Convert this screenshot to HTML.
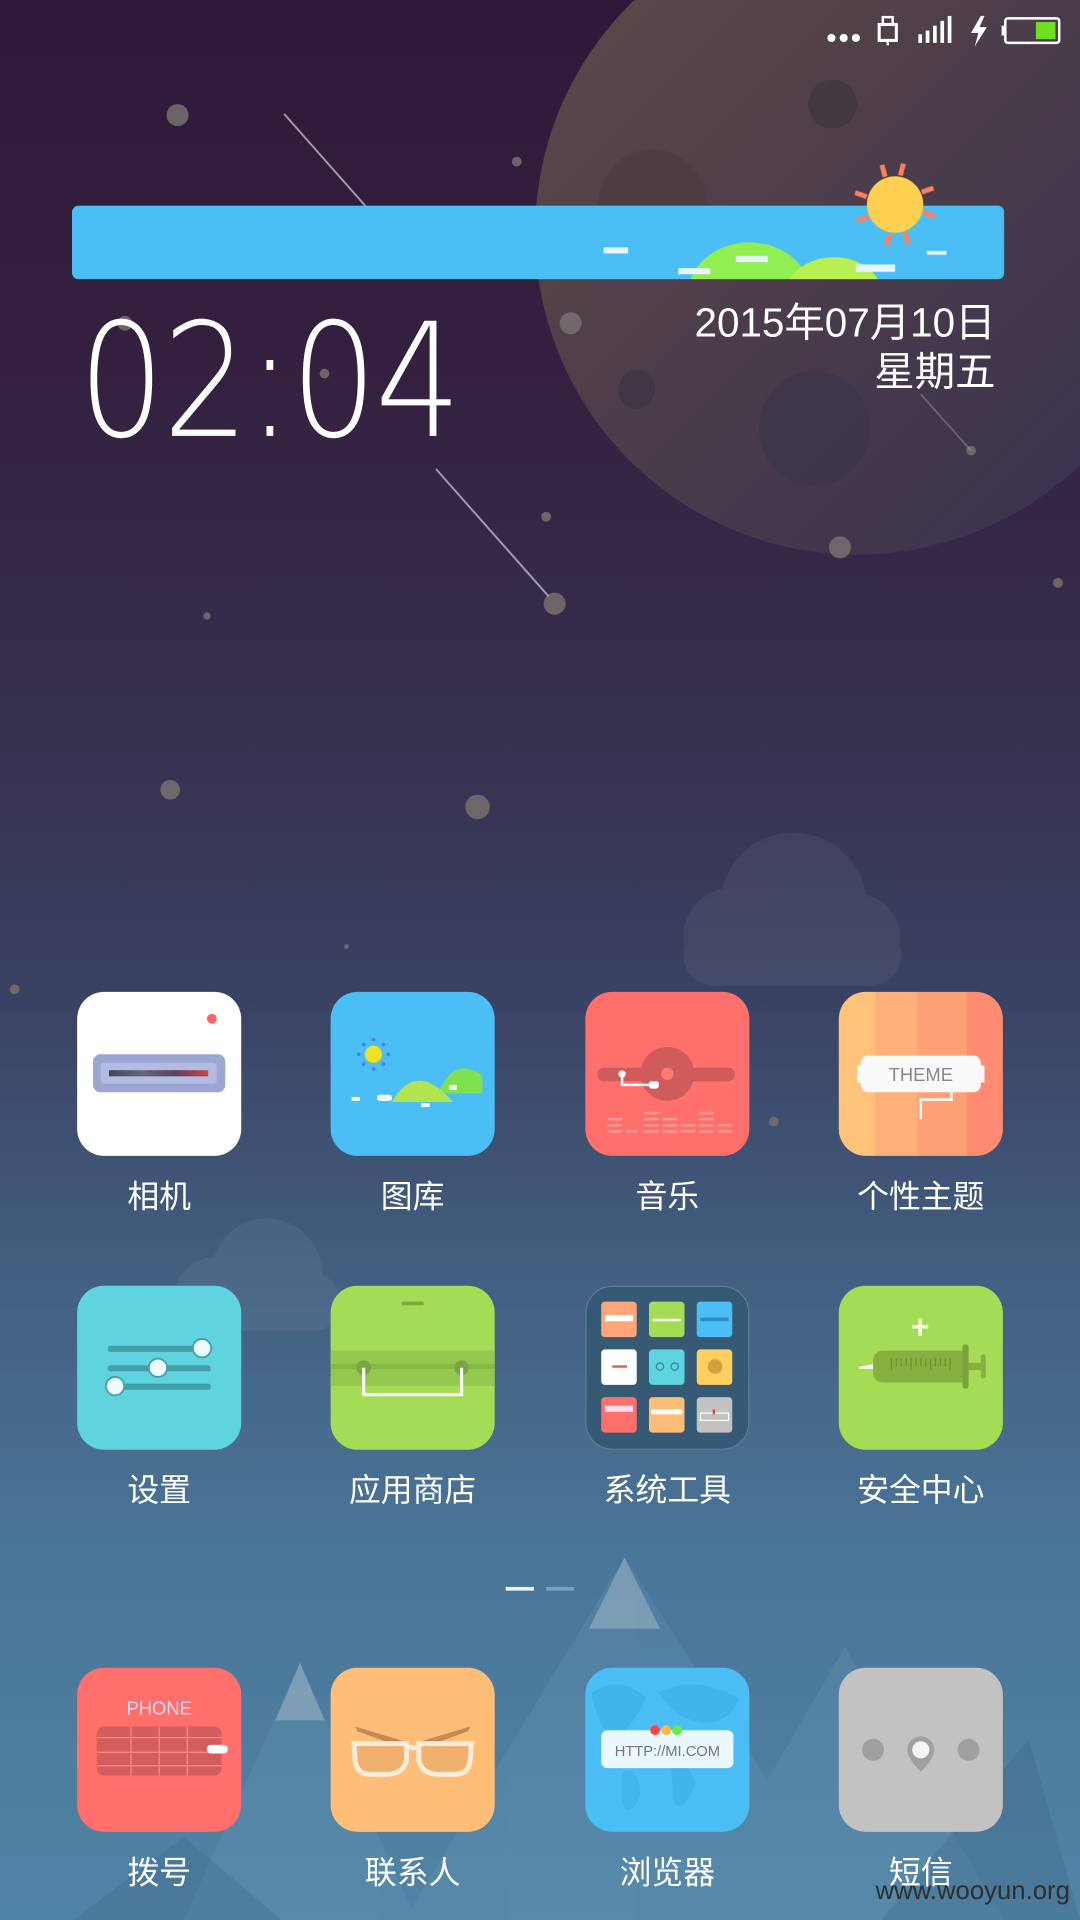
<!DOCTYPE html>
<html><head><meta charset="utf-8"><style>
html,body{margin:0;padding:0;width:1080px;height:1920px;overflow:hidden;background:#3a4a6e}
#s{position:absolute;left:0;top:0;width:882px;height:1568px;transform:scale(1.22449);transform-origin:0 0;overflow:hidden;
background:linear-gradient(180deg,#2e1838 0%,#33213f 20%,#37304f 38%,#3a4263 52%,#425e80 66%,#4a7496 80%,#5084a6 100%);
font-family:"Liberation Sans","Noto Sans CJK SC",sans-serif}
.a{position:absolute}
.ic{position:absolute;width:134px;height:134px;border-radius:22px;overflow:hidden}
.lb{position:absolute;width:180px;text-align:center;color:#fff;font-size:26px;line-height:30px}
</style></head><body><div id="s">
<svg class="a" style="left:0;top:0" width="882" height="1568">
<defs><linearGradient id="mg" x1="0" y1="0" x2="1" y2="1"><stop offset="0" stop-color="#5e4a48"/><stop offset="0.5" stop-color="#4a3c4a"/><stop offset="1" stop-color="#363050"/></linearGradient></defs>
<circle cx="700" cy="190" r="263" fill="url(#mg)"/>
<ellipse cx="533" cy="170" rx="45" ry="48" fill="#4a3c40" opacity=".7"/>
<ellipse cx="680" cy="85" rx="20" ry="20" fill="#3f3440" opacity=".7"/>
<ellipse cx="520" cy="318" rx="15" ry="16" fill="#3e3444" opacity=".8"/>
<ellipse cx="665" cy="350" rx="45" ry="47" fill="#3c3448" opacity=".7"/>
<g fill="#77706e" opacity=".85">
<circle cx="145" cy="94" r="9"/><circle cx="422" cy="132" r="4"/><circle cx="102" cy="264" r="6"/><circle cx="466" cy="264" r="9"/>
<circle cx="265" cy="305" r="4"/><circle cx="446" cy="422" r="4"/><circle cx="686" cy="447" r="9"/><circle cx="453" cy="493" r="9"/>
<circle cx="169" cy="503" r="3"/><circle cx="864" cy="476" r="4"/><circle cx="139" cy="645" r="8"/><circle cx="390" cy="659" r="10"/>
<circle cx="283" cy="773" r="2"/><circle cx="12" cy="808" r="4"/><circle cx="632" cy="916" r="4"/><circle cx="793" cy="368" r="4"/></g>
<g stroke="#c9c2cf" stroke-width="1.5" opacity=".8"><line x1="232" y1="93" x2="300" y2="170"/><line x1="356" y1="383" x2="448" y2="487"/><line x1="752" y1="322" x2="793" y2="368" opacity=".4"/></g>
<g fill="#fff" opacity=".05"><circle cx="648" cy="740" r="60"/><circle cx="598" cy="765" r="40"/><circle cx="700" cy="765" r="35"/><rect x="558" y="755" width="178" height="50" rx="25"/>
<circle cx="218" cy="1040" r="45"/><circle cx="175" cy="1060" r="33"/><rect x="140" y="1040" width="138" height="47" rx="23"/></g>
<g fill="#6a9abb" opacity=".25"><polygon points="510,1272 330,1568 700,1568"/><polygon points="245,1358 150,1568 340,1568"/><polygon points="690,1345 560,1568 820,1568"/></g>
<g fill="#3e6585" opacity=".3"><polygon points="150,1500 60,1568 230,1568"/><polygon points="840,1420 720,1568 882,1568"/></g>
<g fill="#c8d3dd" opacity=".35"><polygon points="510,1272 481,1330 539,1330"/><polygon points="245,1358 225,1405 265,1405"/></g>
</svg>
<svg class="a" style="top:10px;left:670px" width="210" height="32">
<g fill="#fff"><circle cx="9" cy="21" r="3.3"/><circle cx="19" cy="21" r="3.3"/><circle cx="29" cy="21" r="3.3"/></g>
<rect x="48" y="10" width="14" height="13" fill="none" stroke="#fff" stroke-width="2.5"/><rect x="51" y="4" width="8" height="6" fill="none" stroke="#fff" stroke-width="2"/><rect x="54" y="23" width="2" height="4" fill="#fff"/>
<g fill="#fff"><rect x="80" y="18" width="3" height="7"/><rect x="86" y="15" width="3" height="10"/><rect x="92" y="11" width="3" height="14"/><rect x="98" y="7" width="3" height="18"/><rect x="104" y="3" width="3" height="22"/></g>
<polygon points="131,3 123,17 129,17 126,28 136,12 130,12 134,3" fill="#fff"/>
<rect x="151" y="5" width="44" height="20" rx="2" fill="none" stroke="#fff" stroke-width="2"/><rect x="148" y="11" width="3" height="8" fill="#fff"/><rect x="176" y="8" width="16" height="14" fill="#6de020"/>
</svg>
<svg class="a" style="left:59px;top:130px" width="762" height="100">
<rect x="0" y="38" width="761" height="60" rx="5" fill="#4bbff5"/>
<clipPath id="bc"><rect x="0" y="38" width="761" height="60" rx="5"/></clipPath>
<g clip-path="url(#bc)"><ellipse cx="553" cy="110" rx="50" ry="42" fill="#92ef52"/><ellipse cx="622" cy="112" rx="40" ry="32" fill="#b9ef50"/>
<g fill="#e8f6ff"><rect x="434" y="72" width="20" height="5"/><rect x="495" y="89" width="26" height="5"/><rect x="542" y="79" width="26" height="5"/><rect x="640" y="86" width="32" height="6"/><rect x="698" y="75" width="16" height="3"/></g></g>
<g fill="#ff7e5e"><rect x="668" y="3" width="4" height="10" transform="rotate(-15 672 37)"/><rect x="668" y="3" width="4" height="10" transform="rotate(15 672 37)"/><rect x="668" y="3" width="4" height="10" transform="rotate(165 672 37)"/><rect x="668" y="3" width="4" height="10" transform="rotate(195 672 37)"/><rect x="668" y="3" width="4" height="10" transform="rotate(70 672 37)"/><rect x="668" y="3" width="4" height="10" transform="rotate(110 672 37)"/><rect x="668" y="3" width="4" height="10" transform="rotate(-70 672 37)"/><rect x="668" y="3" width="4" height="10" transform="rotate(-110 672 37)"/></g>
<ellipse cx="672" cy="37" rx="23" ry="23" fill="#ffd050"/>
</svg>
<div class="a" style="left:64px;top:234px;font-family:'DejaVu Sans','Liberation Sans',sans-serif;font-weight:200;font-size:129px;line-height:156px;color:#fff;transform:scaleX(0.86);transform-origin:0 0;letter-spacing:-2px">02:04</div>
<div class="a" style="right:69px;top:244px;color:#fff;font-size:33px;line-height:40px;text-align:right">2015年07月10日<br>星期五</div>

<div class="ic" style="left:63px;top:810px;background:#fff">
<div class="a" style="left:106px;top:18px;width:8px;height:8px;border-radius:50%;background:#ff6464"></div>
<div class="a" style="left:13px;top:51px;width:108px;height:31px;border-radius:6px;background:#9ba6d2"></div>
<div class="a" style="left:19px;top:58px;width:95px;height:17px;border-radius:3px;background:#b3bbe0"></div>
<div class="a" style="left:26px;top:64px;width:81px;height:5px;background:linear-gradient(90deg,#445,#667,#5a4060,#c44)"></div></div>
<div class="ic" style="left:270px;top:810px;background:#4bbff5"><svg width="134" height="134">
<circle cx="35" cy="51" r="7" fill="#f5e020"/><g fill="#4a7cf0"><circle cx="35" cy="39" r="1.5"/><circle cx="35" cy="63" r="1.5"/><circle cx="23" cy="51" r="1.5"/><circle cx="47" cy="51" r="1.5"/><circle cx="27" cy="43" r="1.5"/><circle cx="43" cy="43" r="1.5"/><circle cx="27" cy="59" r="1.5"/><circle cx="43" cy="59" r="1.5"/></g>
<path d="M88 83 Q100 52 124 68 L124 83 Z" fill="#7fe050"/><path d="M50 90 Q70 55 100 90 Z" fill="#b0e450"/>
<g fill="#fff"><rect x="17" y="86" width="7" height="3"/><rect x="38" y="84" width="12" height="5" rx="2"/><rect x="74" y="91" width="7" height="3"/><rect x="97" y="76" width="6" height="4"/></g></svg></div>
<div class="ic" style="left:478px;top:810px;background:#ff6f6b"><svg width="134" height="134">
<rect x="10" y="62" width="112" height="11" rx="5" fill="#cf5b5b"/><circle cx="67" cy="67" r="22" fill="#cf5b5b"/><circle cx="67" cy="67" r="5" fill="#ff7a72"/>
<circle cx="30" cy="67" r="3" fill="#fff"/><path d="M30 67 V76 H58" stroke="#fff" stroke-width="2" fill="none"/><rect x="52" y="73" width="8" height="6" rx="2" fill="#fff"/>
<g fill="#ff9a94"><rect x="18" y="103" width="12" height="2"/><rect x="18" y="108" width="12" height="2"/><rect x="18" y="113" width="12" height="2"/><rect x="33" y="113" width="10" height="2"/><rect x="48" y="98" width="12" height="2"/><rect x="48" y="103" width="12" height="2"/><rect x="48" y="108" width="12" height="2"/><rect x="48" y="113" width="12" height="2"/><rect x="63" y="103" width="12" height="2"/><rect x="63" y="108" width="12" height="2"/><rect x="63" y="113" width="12" height="2"/><rect x="78" y="108" width="12" height="2"/><rect x="78" y="113" width="12" height="2"/><rect x="93" y="98" width="12" height="2"/><rect x="93" y="103" width="12" height="2"/><rect x="93" y="108" width="12" height="2"/><rect x="93" y="113" width="12" height="2"/><rect x="108" y="108" width="12" height="2"/><rect x="108" y="113" width="12" height="2"/></g></svg></div>
<div class="ic" style="left:685px;top:810px;background:linear-gradient(90deg,#ffc27a 0 22%,#ffb078 22% 48%,#ffa176 48% 78%,#ff8b72 78%)"><svg width="134" height="134">
<rect x="18" y="52" width="98" height="30" rx="6" fill="#fafafa"/><rect x="15" y="60" width="3" height="14" fill="#fff"/><rect x="116" y="60" width="3" height="14" fill="#fff"/>
<text x="67" y="73" text-anchor="middle" font-family="Liberation Sans,sans-serif" font-size="15" fill="#888">THEME</text>
<path d="M92 82 V88 H67 V104" stroke="#fff" stroke-width="2" fill="none"/></svg></div>
<div class="lb" style="left:40px;top:962px">相机</div>
<div class="lb" style="left:247px;top:962px">图库</div>
<div class="lb" style="left:455px;top:962px">音乐</div>
<div class="lb" style="left:662px;top:962px">个性主题</div>

<div class="ic" style="left:63px;top:1050px;background:#5fd3de"><svg width="134" height="134">
<g fill="#44a0a8"><rect x="25" y="49" width="84" height="5" rx="2"/><rect x="25" y="65" width="84" height="5" rx="2"/><rect x="25" y="80" width="84" height="5" rx="2"/></g>
<g fill="#eefcfd" stroke="#44a0a8" stroke-width="1.5"><circle cx="102" cy="51" r="7.5"/><circle cx="66" cy="67" r="7.5"/><circle cx="31" cy="82" r="7.5"/></g></svg></div>
<div class="ic" style="left:270px;top:1050px;background:#a5dc56"><svg width="134" height="134">
<rect x="58" y="13" width="18" height="3" fill="#7fa840"/><rect x="0" y="53" width="134" height="29" fill="#95c84e"/><rect x="0" y="64" width="134" height="4" fill="#88b846"/>
<circle cx="27" cy="67" r="6" fill="#7da442"/><circle cx="107" cy="67" r="6" fill="#7da442"/><path d="M27 67 V89 H107 V67" stroke="#fff" stroke-width="2.5" fill="none"/></svg></div>
<div class="ic" style="left:478px;top:1050px;background:#365a73;border:1.5px solid #5a7d99;box-sizing:border-box"><svg width="131" height="131">
<rect x="12" y="12" width="29" height="29" rx="3" fill="#ffa578"/><rect x="15" y="23" width="23" height="5" fill="#fff"/>
<rect x="51" y="12" width="29" height="29" rx="3" fill="#a5dc56"/><rect x="54" y="26" width="23" height="2" fill="#fff"/>
<rect x="90" y="12" width="29" height="29" rx="3" fill="#4bbff5"/><rect x="93" y="25" width="23" height="3" fill="#2b8bc0"/>
<rect x="12" y="51" width="29" height="29" rx="3" fill="#fff"/><rect x="21" y="64" width="12" height="2" fill="#e06040"/>
<rect x="51" y="51" width="29" height="29" rx="3" fill="#5fd3de"/><circle cx="60" cy="65" r="3" fill="none" stroke="#2a8a94"/><circle cx="72" cy="65" r="3" fill="none" stroke="#2a8a94"/>
<rect x="90" y="51" width="29" height="29" rx="3" fill="#ffd060"/><circle cx="105" cy="65" r="6" fill="#d4a040"/>
<rect x="12" y="90" width="29" height="29" rx="3" fill="#ff6f6b"/><rect x="15" y="97" width="23" height="5" fill="#fde"/>
<rect x="51" y="90" width="29" height="29" rx="3" fill="#ffbe78"/><rect x="53" y="100" width="25" height="4" fill="#fff"/>
<rect x="90" y="90" width="29" height="29" rx="3" fill="#c2c2c2"/><rect x="93" y="103" width="23" height="6" fill="none" stroke="#fff"/><rect x="103" y="100" width="2" height="4" fill="#e44"/></svg></div>
<div class="ic" style="left:685px;top:1050px;background:#a5dc56"><svg width="134" height="134">
<rect x="65" y="27" width="3" height="14" fill="#f4fbe8"/><rect x="60" y="32" width="13" height="3" fill="#f4fbe8"/>
<rect x="28" y="53" width="78" height="26" rx="8" fill="#86b040"/><rect x="101" y="48" width="5" height="36" rx="2" fill="#7da23c"/><rect x="106" y="63" width="12" height="6" fill="#86b040"/><rect x="116" y="56" width="4" height="20" rx="2" fill="#86b040"/>
<polygon points="17,66 28,64 28,68 17,68" fill="#f4fbe8"/>
<g stroke="#6c9230" stroke-width="1"><line x1="43" y1="59" x2="43" y2="69"/><line x1="47" y1="59" x2="47" y2="66"/><line x1="51" y1="59" x2="51" y2="66"/><line x1="55" y1="59" x2="55" y2="66"/><line x1="59" y1="59" x2="59" y2="69"/><line x1="63" y1="59" x2="63" y2="66"/><line x1="67" y1="59" x2="67" y2="66"/><line x1="71" y1="59" x2="71" y2="66"/><line x1="75" y1="59" x2="75" y2="69"/><line x1="79" y1="59" x2="79" y2="66"/><line x1="83" y1="59" x2="83" y2="66"/><line x1="87" y1="59" x2="87" y2="66"/><line x1="91" y1="59" x2="91" y2="69"/></g></svg></div>
<div class="lb" style="left:40px;top:1202px">设置</div>
<div class="lb" style="left:247px;top:1202px">应用商店</div>
<div class="lb" style="left:455px;top:1202px">系统工具</div>
<div class="lb" style="left:662px;top:1202px">安全中心</div>

<div class="a" style="left:413px;top:1296px;width:23px;height:3px;background:#f0f4f8"></div>
<div class="a" style="left:446px;top:1296px;width:23px;height:3px;background:#7da0bd"></div>

<div class="ic" style="left:63px;top:1362px;background:#ff6f6b"><svg width="134" height="134">
<text x="67" y="38" text-anchor="middle" font-family="Liberation Sans,sans-serif" font-size="15" fill="#fde">PHONE</text>
<rect x="16" y="48" width="102" height="40" rx="6" fill="#d45e5e"/><g stroke="#ff8a86" stroke-width="1"><line x1="16" y1="57" x2="118" y2="57"/><line x1="16" y1="69" x2="118" y2="69"/><line x1="16" y1="80" x2="118" y2="80"/><line x1="44" y1="48" x2="44" y2="88"/><line x1="67" y1="48" x2="67" y2="88"/><line x1="90" y1="48" x2="90" y2="88"/></g>
<rect x="106" y="63" width="17" height="7" rx="3" fill="#fff"/></svg></div>
<div class="ic" style="left:270px;top:1362px;background:#ffbe78"><svg width="134" height="134">
<path d="M20 48 L60 60 L58 65 L22 52Z" fill="#c48a52"/><path d="M114 48 L74 60 L76 65 L112 52Z" fill="#c48a52"/>
<path d="M19 62 H62 V75 Q60 87 45 87 H32 Q21 87 20 75Z" fill="#f0b070" stroke="#fdecd8" stroke-width="4"/>
<path d="M115 62 H72 V75 Q74 87 89 87 H102 Q113 87 114 75Z" fill="#f0b070" stroke="#fdecd8" stroke-width="4"/><rect x="60" y="63" width="14" height="4" fill="#fdecd8"/></svg></div>
<div class="ic" style="left:478px;top:1362px;background:#4bbff5"><svg width="134" height="134">
<g fill="#3fb0ea" opacity=".7"><path d="M5 20 Q30 5 50 25 Q40 45 25 60 Q10 50 5 20Z"/><path d="M60 20 Q90 5 125 25 Q120 45 95 45 Q70 40 60 20Z"/><path d="M30 85 Q45 80 45 105 Q35 125 30 110Z"/><path d="M70 80 Q85 75 90 95 Q80 120 72 110Z"/></g>
<rect x="13" y="51" width="108" height="31" rx="5" fill="#eaf7fe"/><circle cx="57" cy="51" r="4" fill="#f44"/><circle cx="66" cy="51" r="4" fill="#fb4"/><circle cx="75" cy="51" r="4" fill="#6e4"/>
<text x="67" y="72" text-anchor="middle" font-family="Liberation Sans,sans-serif" font-size="12" fill="#777">HTTP://MI.COM</text></svg></div>
<div class="ic" style="left:685px;top:1362px;background:#c2c2c2"><svg width="134" height="134">
<circle cx="28" cy="67" r="9" fill="#a0a0a0"/><circle cx="106" cy="67" r="9" fill="#a0a0a0"/><path d="M67 56 A11 11 0 0 1 78 67 Q78 74 67 85 Q56 74 56 67 A11 11 0 0 1 67 56Z" fill="#a0a0a0"/><circle cx="67" cy="67" r="7" fill="#f4f4f4"/></svg></div>
<div class="lb" style="left:40px;top:1514px">拨号</div>
<div class="lb" style="left:247px;top:1514px">联系人</div>
<div class="lb" style="left:455px;top:1514px">浏览器</div>
<div class="lb" style="left:662px;top:1514px">短信</div>
<div class="a" style="left:715px;top:1531px;font-size:21px;color:#2e2e2e;line-height:28px">www.wooyun.org</div>
</div></body></html>
